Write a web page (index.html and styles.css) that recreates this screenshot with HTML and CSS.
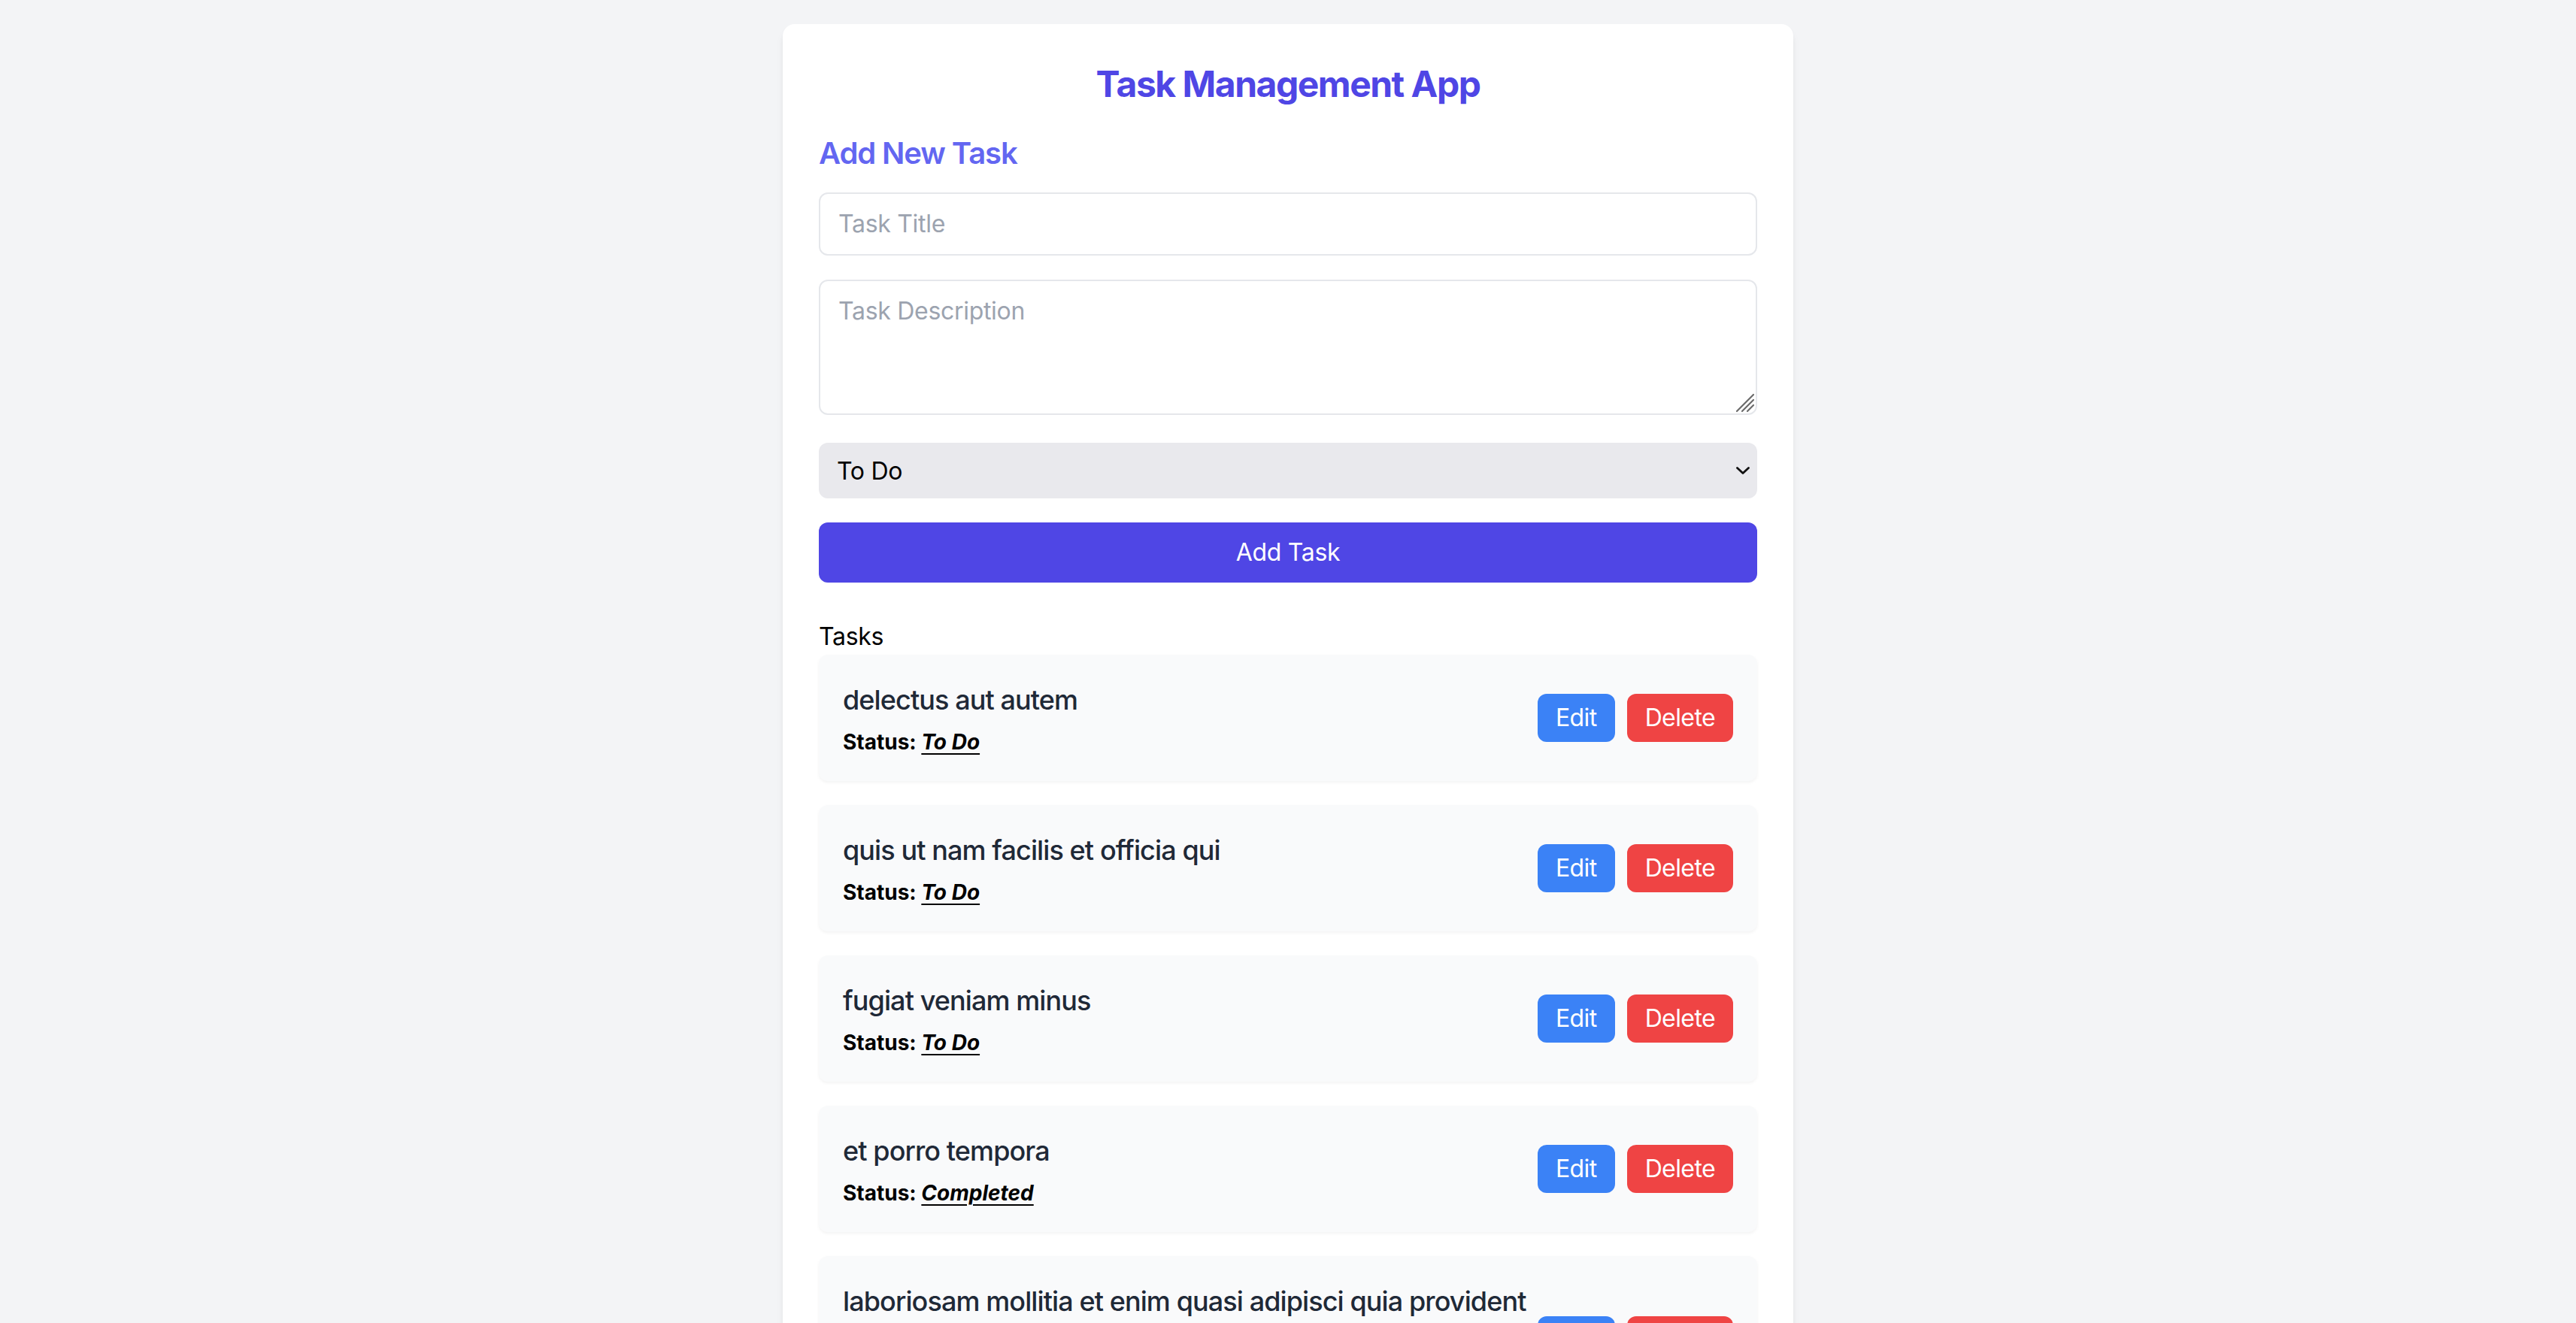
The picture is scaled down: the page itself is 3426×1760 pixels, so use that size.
FILE: index.html
```html
<!DOCTYPE html>
<html lang="en">
<head>
<meta charset="utf-8">
<title>Task Management App</title>
<link rel="stylesheet" href="styles.css">
</head>
<body>
<div class="app">
  <h1 class="app-title">Task Management App</h1>
  <h2 class="section-title">Add New Task</h2>
  <form class="task-form">
    <input class="field" type="text" placeholder="Task Title">
    <div class="area-wrap">
      <textarea class="field field-area" rows="3" placeholder="Task Description"></textarea>
      <svg class="resizer" width="28" height="28" viewBox="0 0 28 28"><path d="M4 26 L26 4 M11 26 L26 11 M18 26 L26 18" fill="none" stroke="#6b6b6b" stroke-width="2.2" stroke-linecap="round"/></svg>
    </div>
    <div class="select-wrap">
      <select class="field-select">
        <option>To Do</option>
        <option>In Progress</option>
        <option>Completed</option>
      </select>
      <svg class="chevron" width="18" height="10" viewBox="0 0 18 10"><path d="M1.5 1.5 L9 8.5 L16.5 1.5" fill="none" stroke="#111" stroke-width="2.8" stroke-linecap="round" stroke-linejoin="round"/></svg>
    </div>
    <button type="button" class="btn-add">Add Task</button>
  </form>
  <h2 class="tasks-title">Tasks</h2>
  <ul class="task-list">
    <li class="task">
      <div class="task-info">
        <h3 class="task-name">delectus aut autem</h3>
        <p class="task-status">Status: <em>To Do</em></p>
      </div>
      <div class="task-actions">
        <button type="button" class="btn btn-edit">Edit</button>
        <button type="button" class="btn btn-delete">Delete</button>
      </div>
    </li>
    <li class="task">
      <div class="task-info">
        <h3 class="task-name">quis ut nam facilis et officia qui</h3>
        <p class="task-status">Status: <em>To Do</em></p>
      </div>
      <div class="task-actions">
        <button type="button" class="btn btn-edit">Edit</button>
        <button type="button" class="btn btn-delete">Delete</button>
      </div>
    </li>
    <li class="task">
      <div class="task-info">
        <h3 class="task-name">fugiat veniam minus</h3>
        <p class="task-status">Status: <em>To Do</em></p>
      </div>
      <div class="task-actions">
        <button type="button" class="btn btn-edit">Edit</button>
        <button type="button" class="btn btn-delete">Delete</button>
      </div>
    </li>
    <li class="task">
      <div class="task-info">
        <h3 class="task-name">et porro tempora</h3>
        <p class="task-status">Status: <em>Completed</em></p>
      </div>
      <div class="task-actions">
        <button type="button" class="btn btn-edit">Edit</button>
        <button type="button" class="btn btn-delete">Delete</button>
      </div>
    </li>
    <li class="task">
      <div class="task-info">
        <h3 class="task-name">laboriosam mollitia et enim quasi adipisci quia provident illum</h3>
        <p class="task-status">Status: <em>To Do</em></p>
      </div>
      <div class="task-actions">
        <button type="button" class="btn btn-edit">Edit</button>
        <button type="button" class="btn btn-delete">Delete</button>
      </div>
    </li>
  </ul>
</div>
</body>
</html>
```

FILE: styles.css
```css
* { box-sizing: border-box; }

html, body {
  margin: 0;
  padding: 0;
}

body {
  background: #f3f4f6;
  font-family: Inter, "Noto Sans", "Liberation Sans", sans-serif;
  color: #000;
  font-size: 32px;
  line-height: 48px;
}

.app {
  width: 1344px;
  margin: 32px auto 0;
  background: #ffffff;
  border-radius: 16px;
  padding: 48px;
  box-shadow: 0 8px 12px -2px rgba(0,0,0,0.08), 0 4px 8px -4px rgba(0,0,0,0.08);
  min-height: 1800px;
}

.app-title {
  margin: 0 0 32px;
  font-size: 48px;
  line-height: 64px;
  font-weight: 700;
  color: #4f46e5;
  text-align: center;
  letter-spacing: -1.5px;
}

.section-title {
  margin: 0 0 24px;
  font-size: 40px;
  line-height: 56px;
  font-weight: 600;
  color: #6366f1;
  letter-spacing: -1.1px;
}

.task-form {
  display: flex;
  flex-direction: column;
}

.field {
  display: block;
  width: 100%;
  margin: 0 0 32px;
  padding: 16px 24px;
  border: 2px solid #e5e7eb;
  border-radius: 12px;
  font-family: inherit;
  font-size: 32px;
  line-height: 48px;
  color: #111827;
  background: #fff;
  outline: none;
  letter-spacing: -0.3px;
}

.field::placeholder {
  color: #9ca3af;
}

.area-wrap {
  position: relative;
  margin-bottom: 37px;
}

.field-area {
  height: 180px;
  margin: 0;
  resize: none;
}

.resizer {
  position: absolute;
  right: 3px;
  bottom: 3px;
  pointer-events: none;
}

.select-wrap {
  position: relative;
  margin-bottom: 32px;
}

.field-select {
  display: block;
  width: 100%;
  height: 74px;
  padding: 0 24px;
  border: none;
  border-radius: 12px;
  background: #e9e9ed;
  font-family: inherit;
  font-size: 32px;
  color: #000;
  appearance: none;
  -webkit-appearance: none;
  outline: none;
  letter-spacing: -0.3px;
}

.chevron {
  position: absolute;
  right: 10px;
  top: 32px;
  pointer-events: none;
}

.btn-add {
  height: 80px;
  border: none;
  border-radius: 12px;
  background: #4f46e5;
  color: #fff;
  font-family: inherit;
  font-size: 32px;
  line-height: 48px;
  padding: 16px;
  letter-spacing: -0.3px;
}

.tasks-title {
  margin: 48px 0 0;
  font-size: 32px;
  line-height: 48px;
  font-weight: 400;
  color: #000;
  letter-spacing: -0.3px;
}

.task-list {
  list-style: none;
  margin: 0;
  padding: 0;
  display: flex;
  flex-direction: column;
  gap: 32px;
}

.task {
  display: flex;
  align-items: center;
  justify-content: space-between;
  padding: 32px;
  background: #f9fafb;
  border-radius: 12px;
  box-shadow: 0 2px 4px rgba(0,0,0,0.05);
}

.task-info {
  flex: 1 1 auto;
  min-width: 0;
}

.task-name {
  margin: 0;
  font-size: 36px;
  line-height: 56px;
  font-weight: 500;
  color: #1f2937;
  letter-spacing: -0.9px;
}

.task-status {
  margin: 8px 0 0;
  font-size: 28px;
  line-height: 40px;
  font-weight: 700;
  color: #000;
}

.task-status em {
  font-style: italic;
  text-decoration: underline;
  text-underline-offset: 5px;
  text-decoration-thickness: 2px;
}

.task-actions {
  display: flex;
  gap: 16px;
  flex: none;
}

.btn {
  border: none;
  border-radius: 12px;
  padding: 8px 24px;
  color: #fff;
  font-family: inherit;
  font-size: 32px;
  line-height: 48px;
  letter-spacing: -0.6px;
}

.btn-edit { background: #3b82f6; }
.btn-delete { background: #ef4444; }
```
